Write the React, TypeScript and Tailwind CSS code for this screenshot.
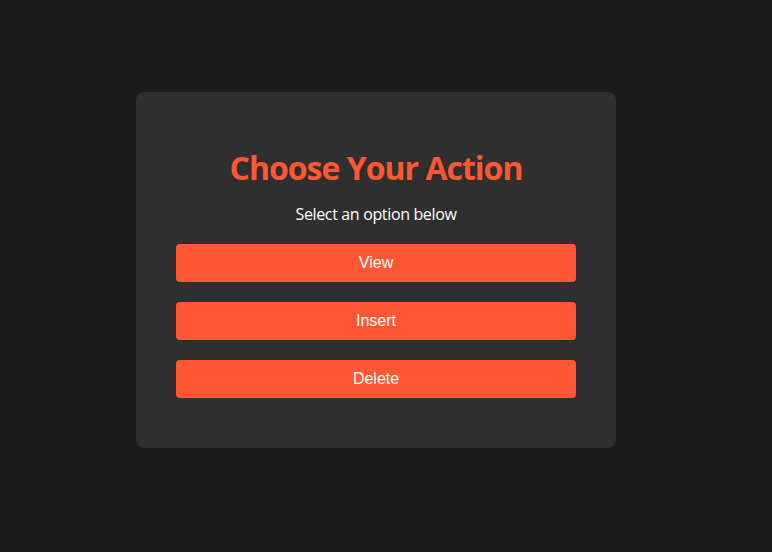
export default function App() {
  const actions = ['View', 'Insert', 'Delete'];

  return (
    <div className="min-h-screen w-full bg-[#1b1b1b] flex justify-center pt-[92px] pr-5">
      <div className="w-[480px] h-[356px] bg-[#2f2f2f] rounded-lg px-10 pt-[56px] pb-[50px] flex flex-col">
        <h1 className="text-[32px] leading-[40px] font-bold tracking-[-1px] text-[#ff5733] text-center font-['Open_Sans',sans-serif]">
          Choose Your Action
        </h1>
        <p className="mt-[14px] text-base leading-6 tracking-[-0.35px] text-white text-center font-['Open_Sans',sans-serif]">
          Select an option below
        </p>
        <div className="mt-[18px] flex flex-col gap-5">
          {actions.map((a) => (
            <button
              key={a}
              className="h-[38px] w-full bg-[#ff5733] text-white text-base rounded font-['Liberation_Sans',Arial,sans-serif]"
            >
              {a}
            </button>
          ))}
        </div>
      </div>
    </div>
  );
}
